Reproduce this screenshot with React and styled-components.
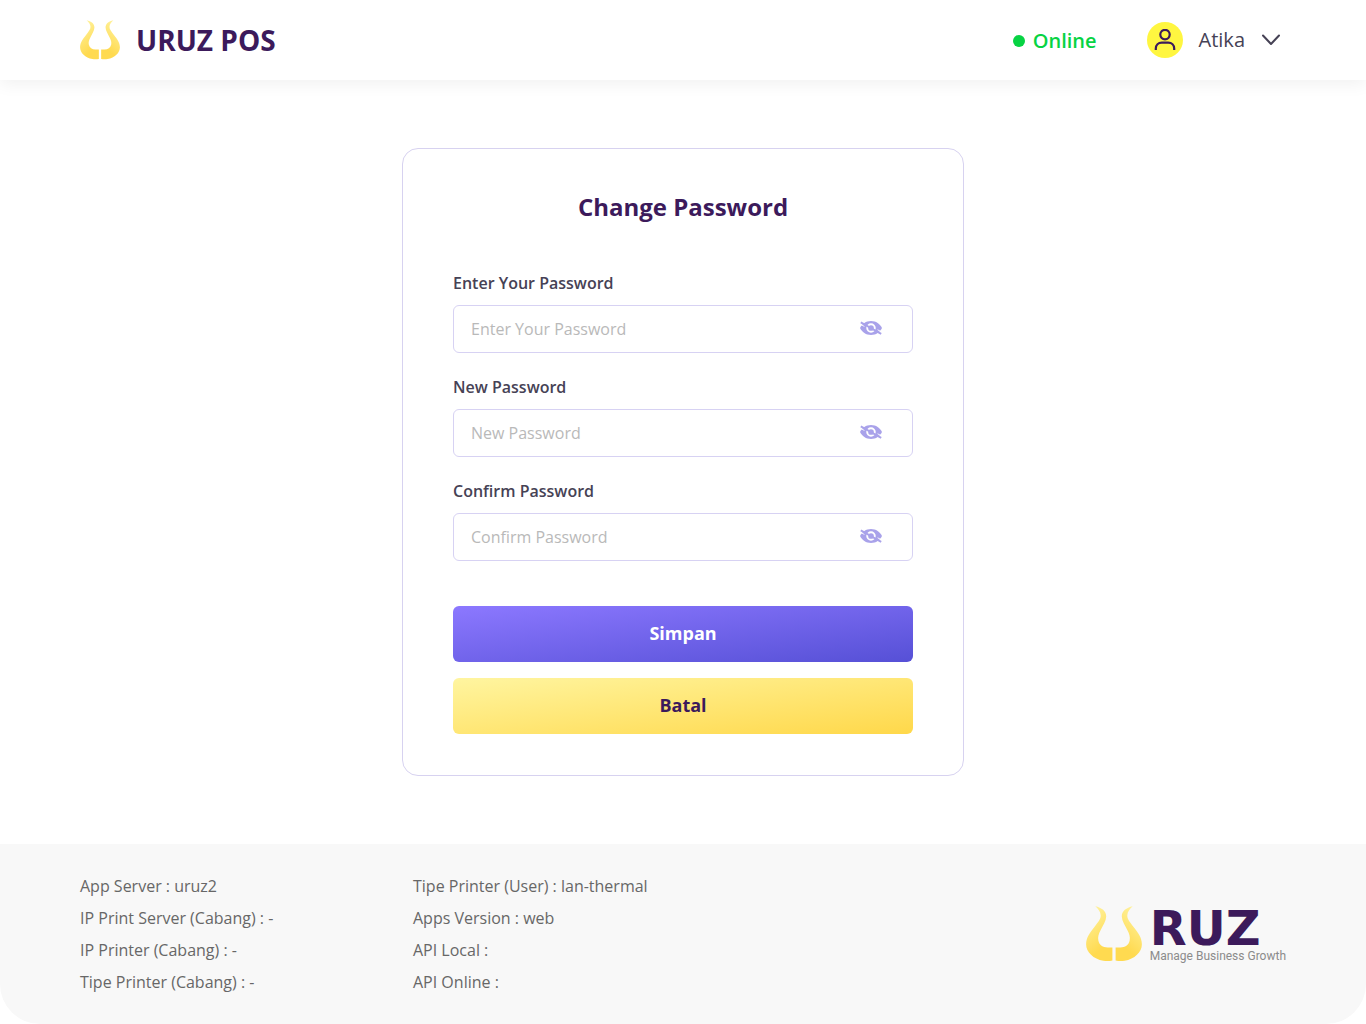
import React, { useState } from 'react';
import styled, { createGlobalStyle, css } from 'styled-components';

const GlobalStyle = createGlobalStyle`
  *, *::before, *::after { box-sizing: border-box; }
  body {
    margin: 0;
    background: #ffffff;
    font-family: "Open Sans", "Noto Sans", sans-serif;
  }
  button, input { font-family: inherit; }
`;

const Page = styled.div`
  display: flex;
  flex-direction: column;
  min-height: 100vh;
`;

const Header = styled.header`
  display: flex;
  align-items: center;
  justify-content: space-between;
  height: 80px;
  padding: 0 80px;
  background: #ffffff;
  box-shadow: 0 4px 16px rgba(0, 0, 0, 0.06);
`;

const Brand = styled.a`
  display: flex;
  align-items: center;
  gap: 16px;
  color: #3c1a5b;
  font-size: 28px;
  font-weight: 700;
  line-height: 40px;
  text-decoration: none;
`;

const Mark = styled.svg`
  display: block;
  width: ${({ $size }) => $size}px;
  height: ${({ $size }) => $size}px;
`;

const HeaderEnd = styled.div`
  display: flex;
  align-items: center;
  gap: 50px;
`;

const Status = styled.div`
  display: flex;
  align-items: center;
  gap: 8px;
  padding-top: 2px;
  color: #07d343;
  font-size: 20px;
  font-weight: 600;
  line-height: 28px;

  &::before {
    content: "";
    width: 12px;
    height: 12px;
    border-radius: 50%;
    background: currentColor;
  }
`;

const UserMenu = styled.button`
  display: flex;
  align-items: center;
  gap: 16px;
  padding: 0 5px 0 0;
  border: 0;
  background: none;
  color: #464255;
  font-size: 20px;
  line-height: 28px;
  cursor: pointer;
`;

const Avatar = styled.span`
  display: grid;
  place-items: center;
  width: 36px;
  height: 36px;
  border-radius: 50%;
  background: #fff640;
  color: #3c1a5b;
`;

const Main = styled.main`
  flex: 1;
  display: flex;
  align-items: center;
  justify-content: center;
  padding: 68px 24px;
`;

const Card = styled.form`
  display: flex;
  flex-direction: column;
  width: 100%;
  max-width: 562px;
  padding: 40px 50px 41px;
  border: 1px solid #d7d2f0;
  border-radius: 16px;
  background: #ffffff;
`;

const Title = styled.h1`
  margin: 0 0 48px;
  color: #3c1a5b;
  font-size: 24px;
  font-weight: 700;
  line-height: 36px;
  text-align: center;
`;

const Fields = styled.div`
  display: flex;
  flex-direction: column;
  gap: 24px;
`;

const Field = styled.div`
  display: flex;
  flex-direction: column;
  gap: 12px;
`;

const Label = styled.label`
  color: #464255;
  font-size: 16px;
  font-weight: 600;
  line-height: 20px;
`;

const InputBox = styled.div`
  display: flex;
  align-items: center;
  height: 48px;
  padding: 0 30px 0 17px;
  border: 1px solid #d7d2f3;
  border-radius: 6px;
  background: #ffffff;
`;

const Input = styled.input`
  flex: 1;
  min-width: 0;
  padding: 0;
  border: 0;
  outline: 0;
  background: none;
  color: #464255;
  font-size: 16px;
  line-height: 24px;

  &::placeholder {
    color: #b9b9b9;
    opacity: 1;
  }
`;

const EyeButton = styled.button`
  display: flex;
  padding: 0 0 2px;
  border: 0;
  background: none;
  color: #a9a2ea;
  cursor: pointer;
`;

const Actions = styled.div`
  display: flex;
  flex-direction: column;
  gap: 16px;
  margin-top: 45px;
`;

const variants = {
  primary: css`
    background: linear-gradient(to bottom right, #8c78ff, #5650d6);
    color: #ffffff;
  `,
  secondary: css`
    background: linear-gradient(to bottom right, #fff5a0, #ffd84a);
    color: #3c1a5b;
  `,
};

const Button = styled.button`
  height: 56px;
  padding: 0 0 2px;
  border: 0;
  border-radius: 6px;
  font-size: 18px;
  font-weight: 700;
  line-height: 24px;
  cursor: pointer;
  ${({ $variant }) => variants[$variant]}
`;

const Footer = styled.footer`
  display: flex;
  align-items: center;
  justify-content: space-between;
  padding: 26px 80px;
  border-radius: 0 0 40px 40px;
  background: #f8f8f8;
`;

const InfoColumns = styled.div`
  display: grid;
  grid-template-columns: 333px auto;
`;

const InfoList = styled.ul`
  margin: 0;
  padding: 0;
  list-style: none;
  color: #676767;
  font-size: 16px;
  line-height: 32px;
`;

const Company = styled.div`
  display: flex;
  align-items: center;
  gap: 8px;
`;

const CompanyText = styled.div`
  display: flex;
  flex-direction: column;
`;

const Wordmark = styled.span`
  color: #3c1a5b;
  font-family: "DejaVu Sans", sans-serif;
  font-size: 48px;
  font-weight: 700;
  line-height: 44px;
`;

const Tagline = styled.span`
  color: #8b8b8b;
  font-family: Roboto, sans-serif;
  font-size: 12px;
  line-height: 12px;
`;

function UruzMark({ size, id }) {
  const horn =
    'M9.3 .3C15.5 1.6 20.4 5.2 20.2 10.6C20 15.4 17 19.4 14.7 24C12.6 28 11.6 31 12.4 34.8C13.4 39.2 16.8 41.4 21.6 41.4H26.4V54.5C23.5 55.2 20.5 55.3 17.3 54.7C7.5 53 .1 46.2 .1 38.2C.1 31.5 4 26.6 8.2 21.2C12 16.4 14.8 13.4 14.7 9.6C14.6 5.8 12.2 2.8 9.3 .3Z';
  return (
    <Mark $size={size} viewBox="0 0 56 56" aria-hidden="true">
      <defs>
        <linearGradient id={id} x1="0.2" y1="0" x2="0.6" y2="1">
          <stop offset="0" stopColor="#fff3a0" />
          <stop offset="0.8" stopColor="#ffda50" />
        </linearGradient>
      </defs>
      <path d={horn} fill={`url(#${id})`} />
      <path d={horn} fill={`url(#${id})`} transform="matrix(-1 0 0 1 56 0)" />
    </Mark>
  );
}

function PersonIcon() {
  return (
    <svg width="22" height="22" viewBox="0 0 22 22" fill="none" stroke="currentColor" strokeWidth="2.2" aria-hidden="true">
      <circle cx="11" cy="5.6" r="4.7" />
      <path d="M1.8 21V19.5C1.8 16 4.3 13.6 7.8 13.6H14.2C17.7 13.6 20.2 16 20.2 19.5V21" />
    </svg>
  );
}

function ChevronIcon() {
  return (
    <svg width="20" height="12" viewBox="0 0 20 12" fill="none" stroke="currentColor" strokeWidth="2" strokeLinecap="round" strokeLinejoin="round" aria-hidden="true">
      <path d="M2 1.5L10 10L18 1.5" />
    </svg>
  );
}

function EyeOffIcon() {
  return (
    <svg width="22" height="14" viewBox="0 0 22 14" fill="none" aria-hidden="true">
      <path d="M0 7C2 2.8 6 0 11 0S20 2.8 22 7C20 11.2 16 14 11 14S2 11.2 0 7Z" fill="currentColor" />
      <circle cx="11" cy="7" r="3.8" stroke="#fff" strokeWidth="1.9" />
      <path d="M0 3.2L4.4 5.4M17.6 8.8L22 11" stroke="#fff" strokeWidth="0.9" />
      <path d="M0.8 1.4L21.2 12.8" stroke="currentColor" strokeWidth="1.9" />
    </svg>
  );
}

function PasswordField({ id, label }) {
  const [visible, setVisible] = useState(false);
  return (
    <Field>
      <Label htmlFor={id}>{label}</Label>
      <InputBox>
        <Input id={id} type={visible ? 'text' : 'password'} placeholder={label} />
        <EyeButton type="button" aria-label="Toggle visibility" onClick={() => setVisible(!visible)}>
          <EyeOffIcon />
        </EyeButton>
      </InputBox>
    </Field>
  );
}

const fields = [
  { id: 'current-password', label: 'Enter Your Password' },
  { id: 'new-password', label: 'New Password' },
  { id: 'confirm-password', label: 'Confirm Password' },
];

const info = [
  ['App Server : uruz2', 'IP Print Server (Cabang) : -', 'IP Printer (Cabang) : -', 'Tipe Printer (Cabang) : -'],
  ['Tipe Printer (User) : lan-thermal', 'Apps Version : web', 'API Local :', 'API Online :'],
];

export default function App() {
  return (
    <Page>
      <GlobalStyle />
      <Header>
        <Brand href="#">
          <UruzMark size={40} id="mark-header" />
          URUZ POS
        </Brand>
        <HeaderEnd>
          <Status>Online</Status>
          <UserMenu type="button">
            <Avatar>
              <PersonIcon />
            </Avatar>
            Atika
            <ChevronIcon />
          </UserMenu>
        </HeaderEnd>
      </Header>
      <Main>
        <Card onSubmit={(event) => event.preventDefault()}>
          <Title>Change Password</Title>
          <Fields>
            {fields.map((field) => (
              <PasswordField key={field.id} {...field} />
            ))}
          </Fields>
          <Actions>
            <Button type="submit" $variant="primary">Simpan</Button>
            <Button type="button" $variant="secondary">Batal</Button>
          </Actions>
        </Card>
      </Main>
      <Footer>
        <InfoColumns>
          {info.map((lines) => (
            <InfoList key={lines[0]}>
              {lines.map((line) => (
                <li key={line}>{line}</li>
              ))}
            </InfoList>
          ))}
        </InfoColumns>
        <Company>
          <UruzMark size={56} id="mark-footer" />
          <CompanyText>
            <Wordmark>RUZ</Wordmark>
            <Tagline>Manage Business Growth</Tagline>
          </CompanyText>
        </Company>
      </Footer>
    </Page>
  );
}
